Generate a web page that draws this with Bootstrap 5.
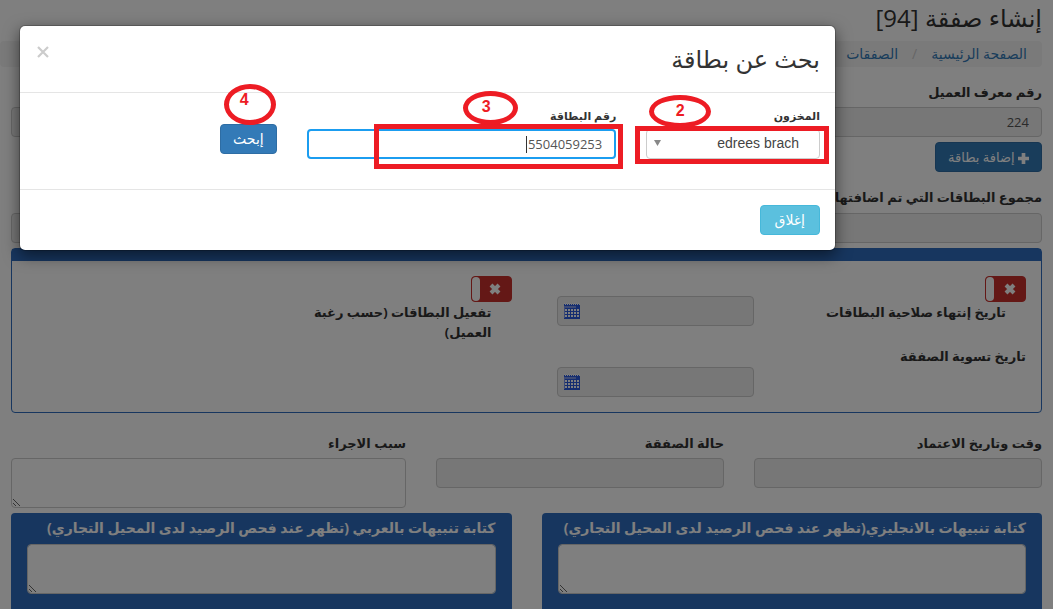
<!DOCTYPE html>
<html lang="ar" dir="rtl">
<head>
<meta charset="utf-8">
<meta name="viewport" content="width=device-width, initial-scale=1">
<title>إنشاء صفقة</title>
<link href="https://cdn.jsdelivr.net/npm/bootstrap@5.3.0/dist/css/bootstrap.min.css" rel="stylesheet">
<style>
body{font:14px/20px "Open Sans","DejaVu Sans",sans-serif;color:#333;background:#fff;overflow:hidden}
.page-shell{height:100vh;margin-right:11px;overflow:hidden;position:relative}
.page-body{padding:0 11px}
h1{font-size:24px;line-height:27px;margin:0;padding:4px 0 10px}
.crumbs{background:#f5f5f5;border-radius:4px;margin:0 0 15px -11px;padding:3px 15px;--bs-breadcrumb-divider:"/"}
.crumbs a{color:#337ab7;text-decoration:none}
.crumbs .breadcrumb-item+.breadcrumb-item{padding:0 14px 0 0}
.crumbs .breadcrumb-item+.breadcrumb-item::before{float:right;color:#ccc;padding:0 0 0 14px}
.page-body label{font-size:13px;font-weight:700;display:block}
.form-control{font-size:13px;line-height:20px;padding:4px 12px;height:30px;color:#555;border-color:#ccc;border-radius:4px}
.form-control:disabled,.form-control[readonly]{background:#eee}
textarea.form-control{height:50px}
.btn{font-size:14px;line-height:20px;padding:4px 12px;border-radius:4px}
.btn-blue,.btn-blue:hover{background:#337ab7;border-color:#2e6da4;color:#fff}
.btn-add{font-size:13px;margin:5px 0}
.btn-sky,.btn-sky:hover{background:#5bc0de;border-color:#46b8da;color:#fff;padding:4px 14px}
.label-gap{margin-bottom:5px}
.sum-label{margin:10px 0 6px}
.block{border:1px solid #2e6cbe;border-radius:4px;margin-top:5px}
.block-head{background:#2e6cbe;height:12px}
.block-main{padding:15px 15px;min-height:151px}
.row-30{--bs-gutter-x:30px}
.switch{width:41px;height:26px;border:1px solid #c9302c;border-radius:4px;background:#c9302c;display:flex;padding:0;direction:ltr}
.switch i{width:8px;background:#fff;border-radius:4px}
.switch svg{margin:6px auto}
.dates{width:197px;margin:20px 0 0 15px;display:grid;gap:41px;align-content:start}
.thirds{display:grid;grid-template-columns:288fr 288fr 395fr;gap:30px;margin:20px 0 5px}
.thirds label{margin-bottom:5px}
.wide-block{background:#2e6cbe;border-radius:4px;padding:5px 16px 15px;color:#fff;height:140px}
.wide-block label{font-size:14px;margin-bottom:6px}
.date-box{position:relative}
.date-box svg{position:absolute;left:7px;top:7px}
.veil{position:absolute;inset:0;width:100%;height:100%;z-index:10}
.card-search{position:absolute;z-index:20;display:block;height:auto;overflow:visible}
.card-search .modal-dialog{max-width:none;margin:26px 218px 0 20px}
.card-search .modal-content{border:1px solid rgba(0,0,0,.2);background-clip:padding-box;border-radius:6px;box-shadow:0 5px 15px rgba(0,0,0,.5);margin:-1px;width:auto;color:#333}
.card-search .modal-header{padding:15px;height:67px;border-color:#e5e5e5;align-items:flex-start}
.card-search .modal-title{font-size:24px;line-height:36px}
.close-x{border:0;background:none;color:#ccc;padding:0;width:16px;height:20px;line-height:1}
.card-search .modal-body{padding:15px;height:96px}
.card-search .modal-footer{padding:15px;justify-content:flex-start;border-color:#e5e5e5}
.card-search .modal-footer>*{margin:0}
.small-label{font-size:11px;line-height:16px;font-weight:700;display:block;margin-bottom:5px}
.stock{appearance:none;width:100%;height:30px;border:1px solid #ccc;border-radius:4px;background:#fff;color:#444;font:14px/26px "Liberation Sans",sans-serif;padding:0 20px 2px 24px}
.arrow{position:absolute;left:23px;top:32px}
.card-no,.card-no:focus{border:2px solid #1b9df0;box-shadow:none;padding:3px 12px}
.caret-bar{position:absolute;width:1px;height:17px;background:#333;top:28px;right:104px}
.mark-box{position:absolute;border:5px solid #ed1c24;pointer-events:none}
.mark-ring{position:absolute;border:5px solid #ed1c24;border-radius:50%;color:#ed1c24;font:bold 16px/22px "Liberation Sans",sans-serif;text-align:center;pointer-events:none}
.box-stock{left:4px;right:6px;top:18px;height:38px}
.box-no{left:82px;right:8px;top:16px;height:45px}
.ring-two{left:18px;top:-13px;width:62px;height:33px}
.ring-three{left:171px;top:-17px;width:55px;height:34px;padding-right:8px}
.ring-four{right:16px;top:-24px;width:52px;height:41px;padding-right:11px}
.ring-three,.ring-four{box-sizing:border-box;direction:ltr}
</style>
</head>
<body>
<svg width="0" height="0" class="position-absolute"><defs><symbol id="cal" viewBox="0 0 16 16"><path fill="#2a5be0" d="M0 1h16v15H0z"/><path fill="#7b95e8" d="M0 3h12v2H0zM0 5h1v10H0z"/><path stroke="#fff" stroke-dasharray="1 1" d="M0 .5h16M1 1.500h15"/><path stroke="#fff" stroke-width="2" stroke-dasharray="2 1" d="M1 7h14M1 10h14M1 13h14"/></symbol></defs></svg>
<div class="page-shell">
<main class="page-body">
  <h1>إنشاء صفقة [94]</h1>
  <ol class="breadcrumb crumbs">
    <li class="breadcrumb-item"><a href="#">الصفحة الرئيسية</a></li>
    <li class="breadcrumb-item"><a href="#">الصفقات</a></li>
    <li class="breadcrumb-item"></li>
  </ol>
  <label for="cust" class="label-gap">رقم معرف العميل</label>
  <input id="cust" class="form-control" value="224" disabled>
  <button class="btn btn-blue btn-add" type="button"><svg width="11" height="11" viewBox="0 0 12 12" fill="currentColor"><path d="M4 0h4v4h4v4H8v4H4V8H0V4h4z"/></svg> إضافة بطاقة</button>
  <label for="sum" class="sum-label">مجموع البطاقات التي تم اضافتها</label>
  <input id="sum" class="form-control" disabled>
  <section class="block">
    <div class="block-head"></div>
    <div class="block-main">
      <div class="row row-30">
        <div class="col-6 d-flex justify-content-between">
          <div>
            <button class="switch" type="button" aria-label="تاريخ إنتهاء صلاحية البطاقات"><i></i><svg width="12" height="12" viewBox="0 0 12 12"><path d="M2 2l8 8M10 2l-8 8" stroke="#fff" stroke-width="4"/></svg></button>
            <label for="exp" class="pe-3 me-1">تاريخ إنتهاء صلاحية البطاقات</label>
            <label for="settle" class="mt-4">تاريخ تسوية الصفقة</label>
          </div>
          <div class="dates">
            <div class="date-box"><input id="exp" class="form-control" disabled><svg width="16" height="16"><use href="#cal"/></svg></div>
            <div class="date-box"><input id="settle" class="form-control" disabled><svg width="16" height="16"><use href="#cal"/></svg></div>
          </div>
        </div>
        <div class="col-6"><div class="row row-30"><div class="col-6">
          <button id="act" class="switch" type="button"><i></i><svg width="12" height="12" viewBox="0 0 12 12"><path d="M2 2l8 8M10 2l-8 8" stroke="#fff" stroke-width="4"/></svg></button>
          <label for="act" class="pe-3 me-1">تفعيل البطاقات (حسب رغبة العميل)</label>
        </div></div></div>
      </div>
    </div>
  </section>
  <div class="thirds">
    <div><label for="when">وقت وتاريخ الاعتماد</label><input id="when" class="form-control" disabled></div>
    <div><label for="state">حالة الصفقة</label><input id="state" class="form-control" disabled></div>
    <div><label for="why">سبب الاجراء</label><textarea id="why" class="form-control"></textarea></div>
  </div>
  <div class="row row-30">
    <div class="col-6"><div class="wide-block"><label for="en">كتابة تنبيهات بالانجليزي(تظهر عند فحص الرصيد لدى المحيل التجاري)</label><textarea id="en" class="form-control"></textarea></div></div>
    <div class="col-6"><div class="wide-block"><label for="arb">كتابة تنبيهات بالعربي (تظهر عند فحص الرصيد لدى المحيل التجاري)</label><textarea id="arb" class="form-control"></textarea></div></div>
  </div>
</main>
<div class="modal-backdrop show veil"></div>
<div class="modal card-search" role="dialog" aria-labelledby="dlg">
  <div class="modal-dialog"><div class="modal-content">
    <div class="modal-header justify-content-between"><h4 class="modal-title" id="dlg">بحث عن بطاقة</h4>
      <button class="close-x" type="button" aria-label="إغلاق"><svg width="12" height="12" viewBox="0 0 12 12"><path d="M1 1l10 10M11 1L1 11" stroke="#ccc" stroke-width="2.200"/></svg></button></div>
    <div class="modal-body"><div class="row row-30">
      <div class="col-3 position-relative"><label class="small-label" for="stock">المخزون</label>
        <select id="stock" class="stock"><option>edrees brach</option></select>
        <svg class="arrow" width="7" height="6"><path d="M0 0h7L3.500 6z" fill="#888"/></svg>
        <span class="mark-box box-stock"></span><span class="mark-ring ring-two">2</span></div>
      <div class="col-5 position-relative"><label class="small-label" for="cardno">رقم البطاقة</label>
        <input id="cardno" class="form-control card-no" value="5504059253"><span class="caret-bar"></span>
        <span class="mark-box box-no"></span><span class="mark-ring ring-three">3</span></div>
      <div class="col-4 position-relative pt-3"><button class="btn btn-blue" type="button">إبحث</button><span class="mark-ring ring-four">4</span></div>
    </div></div>
    <div class="modal-footer"><button class="btn btn-sky" type="button">إغلاق</button></div>
  </div></div>
</div>
</div>
<script src="https://cdn.jsdelivr.net/npm/bootstrap@5.3.0/dist/js/bootstrap.bundle.min.js"></script>
</body>
</html>
